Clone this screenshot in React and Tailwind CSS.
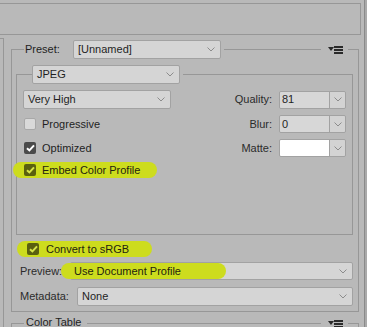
import React from 'react';

const LINE = 'border-[#979797]';

const Chevron = () => (
  <svg width="8" height="5" viewBox="0 0 8 5" className="shrink-0">
    <path d="M0.5 0.5L4 4L7.5 0.5" fill="none" stroke="#8c8c8c" strokeWidth="1" />
  </svg>
);

const MenuIcon = () => (
  <svg width="15" height="8" viewBox="0 0 15 8" className="shrink-0">
    <polygon points="0,1 6,1 3,5" fill="#2a2a2a" />
    <rect x="6" y="0" width="9" height="2" fill="#2a2a2a" />
    <rect x="6" y="3" width="9" height="2" fill="#2a2a2a" />
    <rect x="6" y="6" width="9" height="2" fill="#2a2a2a" />
  </svg>
);

function Dropdown({ value, className = '' }) {
  return (
    <div
      className={`h-[19px] flex items-center justify-between pl-[4px] pr-[5px] bg-[#d5d5d5] border border-[#a2a2a2] rounded-[2px] ${className}`}
    >
      <span className="leading-none">{value}</span>
      <Chevron />
    </div>
  );
}

function ComboInput({ value, white }) {
  return (
    <div className="h-[18px] w-[67px] flex border border-[#a2a2a2] rounded-[2px] overflow-hidden">
      <div className={`flex-1 flex items-center pl-[2px] ${white ? 'bg-white' : 'bg-[#d7d7d7]'}`}>
        <span className="leading-none">{value}</span>
      </div>
      <div className="w-[16px] flex items-center justify-center border-l border-[#a2a2a2] bg-[#d3d3d3]">
        <Chevron />
      </div>
    </div>
  );
}

function Checkbox({ checked, olive }) {
  if (!checked) {
    return <div className="w-[12px] h-[12px] rounded-[2px] bg-[#d9d9d9] border border-[#a8a8a8] shrink-0" />;
  }
  return (
    <div
      className={`w-[12px] h-[12px] rounded-[2px] flex items-center justify-center shrink-0 ${
        olive ? 'bg-[#5a600f]' : 'bg-[#4a4a4a]'
      }`}
    >
      <svg width="9" height="8" viewBox="0 0 9 8">
        <path
          d="M1 4.2L3.4 6.4L8 1.4"
          fill="none"
          stroke={olive ? '#d6e44a' : '#ffffff'}
          strokeWidth="2"
        />
      </svg>
    </div>
  );
}

function LabeledCombo({ label, value, white }) {
  return (
    <div className="flex items-center mr-[6px]">
      <span className="text-[#2b2b2b] mr-[7px]">{label}</span>
      <ComboInput value={value} white={white} />
    </div>
  );
}

export default function App() {
  return (
    <div className="w-[367px] h-[327px] overflow-hidden bg-[#b9b9b9] flex font-['Liberation_Sans',Arial,sans-serif] text-[11px] text-[#1f1f1f]">
      <div className="w-[364px] flex flex-col">
        {/* top strip */}
        <div className={`mt-[3px] mr-[3px] h-[32px] shrink-0 border-y border-r ${LINE}`} />

        <div className="flex flex-1">
          <div className={`w-[4px] mt-[3px] border-t border-r ${LINE}`} />

          <div className="ml-[7px] w-[348px] pt-[5px] flex flex-col">
            {/* Preset header */}
            <div className="flex h-[19px] shrink-0">
              <div className={`w-[13px] mt-[9px] border-l border-t ${LINE}`} />
              <div className="w-[49px] flex items-center pl-[1px]">Preset:</div>
              <Dropdown value="[Unnamed]" className="w-[148px]" />
              <div className={`flex-1 ml-[3px] mt-[9px] h-0 border-t ${LINE}`} />
              <div className="ml-[7px] mr-[5px] flex items-center pt-[1px]">
                <MenuIcon />
              </div>
              <div className={`w-[11px] mt-[9px] border-t border-r ${LINE}`} />
            </div>

            {/* Preset body */}
            <div className={`border-x border-b ${LINE} pl-[4px] pr-[5px] pt-[6px] pb-[6px] flex flex-col`}>
              {/* JPEG group */}
              <div className="flex h-[19px]">
                <div className={`w-[16px] mt-[9px] border-l border-t ${LINE}`} />
                <Dropdown value="JPEG" className="w-[148px]" />
                <div className={`flex-1 ml-[3px] mt-[9px] border-t border-r ${LINE}`} />
              </div>
              <div className={`h-[151px] border-x border-b ${LINE} pt-[6px] flex flex-col`}>
                <div className="flex items-center justify-between h-[19px]">
                  <Dropdown value="Very High" className="w-[148px] ml-[6px]" />
                  <LabeledCombo label="Quality:" value="81" />
                </div>
                <div className="flex items-center justify-between h-[18px] mt-[6px]">
                  <div className="flex items-center ml-[7px]">
                    <Checkbox />
                    <span className="ml-[6px]">Progressive</span>
                  </div>
                  <LabeledCombo label="Blur:" value="0" />
                </div>
                <div className="flex items-center justify-between h-[18px] mt-[6px]">
                  <div className="flex items-center ml-[7px]">
                    <Checkbox checked />
                    <span className="ml-[6px]">Optimized</span>
                  </div>
                  <LabeledCombo label="Matte:" value="" white />
                </div>
                <div className="flex mt-[5px]">
                  <div className="-ml-[4px] h-[16px] w-[144px] rounded-full bg-[#cddc1e] flex items-center pl-[11px]">
                    <Checkbox checked olive />
                    <span className="ml-[6px] text-[#23230e]">Embed Color Profile</span>
                  </div>
                </div>
              </div>

              <div className="flex mt-[6px]">
                <div className="ml-[1px] h-[16px] w-[135px] rounded-full bg-[#cddc1e] flex items-center pl-[10px]">
                  <Checkbox checked olive />
                  <span className="ml-[7px] text-[#23230e]">Convert to sRGB</span>
                </div>
              </div>

              <div className="flex items-center h-[18px] mt-[5px]">
                <div className="w-[54px] pl-[4px] text-[#2b2b2b]">Preview:</div>
                <div className="flex-1 h-[18px] flex items-center justify-between bg-[#d5d5d5] border border-[#a2a2a2] rounded-[2px] pr-[5px]">
                  <div className="-ml-[10px] h-[16px] w-[165px] rounded-full bg-[#cddc1e] flex items-center pl-[13px]">
                    <span className="leading-none text-[#23230e]">Use Document Profile</span>
                  </div>
                  <Chevron />
                </div>
              </div>

              <div className="flex items-center h-[18px] mt-[7px]">
                <div className="w-[61px] pl-[4px] text-[#2b2b2b]">Metadata:</div>
                <Dropdown value="None" className="flex-1 h-[18px]" />
              </div>
            </div>

            {/* Color Table header */}
            <div className="flex h-[19px] mt-[2px] shrink-0">
              <div className={`w-[13px] mt-[9px] border-l border-t ${LINE}`} />
              <div className="flex items-center pl-[2px] pb-[3px]">Color Table</div>
              <div className={`flex-1 ml-[6px] mt-[9px] h-0 border-t ${LINE}`} />
              <div className="ml-[7px] mr-[5px] flex items-center pt-[1px]">
                <MenuIcon />
              </div>
              <div className={`w-[11px] mt-[9px] border-t border-r ${LINE}`} />
            </div>
          </div>
        </div>
      </div>
      <div className="w-[3px] bg-[#a9a9a9] border-l border-[#8a8a8a]" />
    </div>
  );
}
